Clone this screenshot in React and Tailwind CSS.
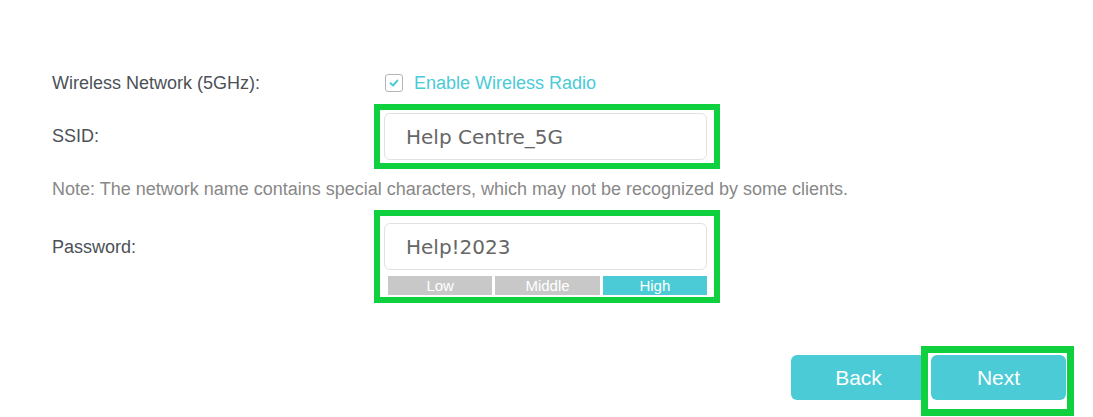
export default function App() {
  return (
    <div className="w-[1093px] h-[417px] bg-white overflow-hidden font-['Liberation_Sans',Arial,sans-serif] text-[18px]">
      <div className="pt-[68px] pl-[52px] flex flex-col">
        {/* Row 1 */}
        <div className="flex items-center h-[30px]">
          <div className="w-[322px] text-[#4b5157]">Wireless Network (5GHz):</div>
          <div className="flex items-center pl-[11px]">
            <div className="w-[18px] h-[18px] rounded-[3px] border-[1.5px] border-[#b5b5b5] bg-white flex items-center justify-center">
              <svg width="12" height="12" viewBox="0 0 12 12">
                <path d="M2.6 6.3 L5 8.5 L9.4 3.6" fill="none" stroke="#4acbd6" strokeWidth="2" strokeLinecap="round" strokeLinejoin="round" />
              </svg>
            </div>
            <span className="ml-[11px] text-[#4acbd6]">Enable Wireless Radio</span>
          </div>
        </div>

        {/* SSID */}
        <div className="flex items-center mt-[6px] h-[65px]">
          <div className="w-[322px] text-[#4b5157]">SSID:</div>
          <div className="w-[346px] h-[65px] border-[6px] border-[#0fd140] pl-[4px] pr-[7px] pt-[3px]">
            <div className="h-[47px] rounded-[6px] border border-[#e2e2e2] flex items-center pl-[21px] font-['DejaVu_Sans',Verdana,sans-serif] text-[20px] text-[#666666]">
              Help Centre_5G
            </div>
          </div>
        </div>

        {/* Note */}
        <div className="mt-[9px] h-[22px] leading-[22px] text-[#888888]">
          Note: The network name contains special characters, which may not be recognized by some clients.
        </div>

        {/* Password */}
        <div className="flex mt-[10px] h-[93px]">
          <div className="w-[322px] text-[#4b5157] pt-[26px] leading-[22px]">Password:</div>
          <div className="w-[346px] h-[93px] border-[6px] border-[#0fd140] pl-[4px] pr-[7px] pt-[7px]">
            <div className="h-[47px] rounded-[6px] border border-[#e2e2e2] flex items-center pl-[21px] font-['DejaVu_Sans',Verdana,sans-serif] text-[20px] text-[#666666]">
              Help!2023
            </div>
            <div className="mt-[6px] ml-[4px] flex gap-[3px] h-[19px] text-[15px] leading-[19px] text-white">
              <div className="flex-1 bg-[#c8c8c8] text-center">Low</div>
              <div className="flex-1 bg-[#c8c8c8] text-center">Middle</div>
              <div className="flex-1 bg-[#4acbd6] text-center">High</div>
            </div>
          </div>
        </div>

        {/* Buttons */}
        <div className="flex justify-end pr-[27px] mt-[52px] gap-[5px]">
          <button className="w-[135px] h-[45px] rounded-[6px] bg-[#4acbd6] text-white text-[21px]">Back</button>
          <div className="relative">
            <button className="w-[135px] h-[45px] rounded-[6px] bg-[#4acbd6] text-white text-[21px]">Next</button>
            <div className="absolute left-[-10px] right-[-8px] top-[-9px] bottom-[-16px] border-[7px] border-[#0fd140] pointer-events-none" />
          </div>
        </div>
      </div>
    </div>
  );
}
